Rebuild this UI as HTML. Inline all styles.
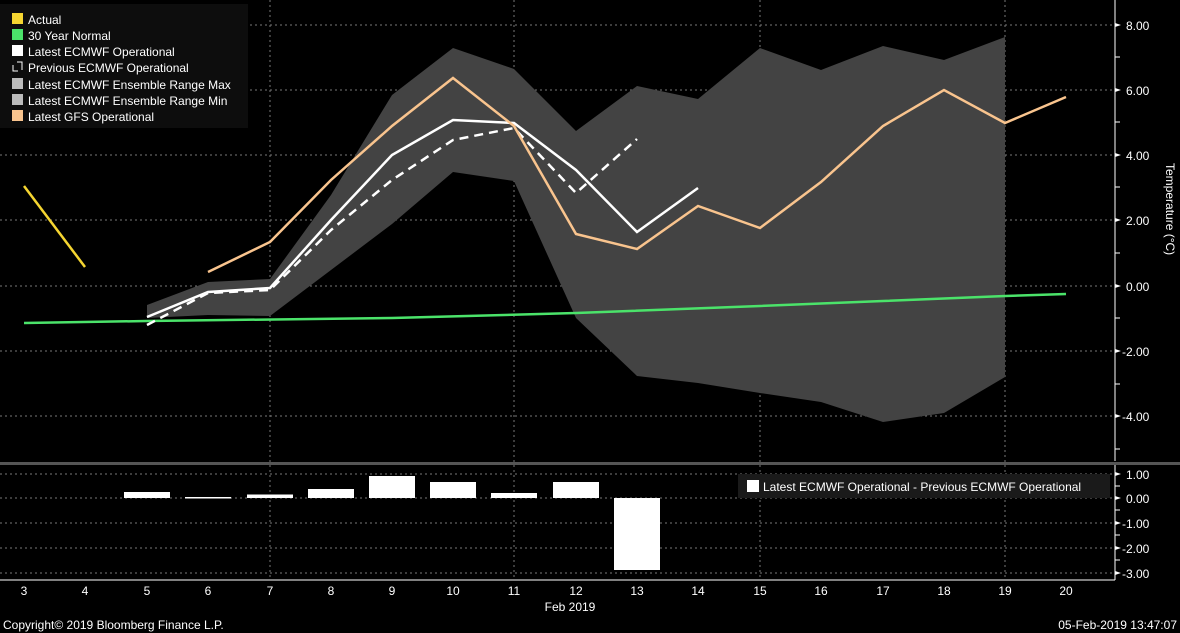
<!DOCTYPE html><html><head><style>body{margin:0;background:#000;width:1180px;height:633px;overflow:hidden}svg{display:block}text{font-family:"Liberation Sans",sans-serif;fill:#fff;font-size:12px}</style></head><body>
<svg width="1180" height="633" viewBox="0 0 1180 633">
<g stroke="#777" stroke-dasharray="2,3" stroke-width="1">
<line x1="0" y1="25" x2="1115" y2="25"/><line x1="0" y1="90" x2="1115" y2="90"/><line x1="0" y1="155" x2="1115" y2="155"/><line x1="0" y1="220" x2="1115" y2="220"/><line x1="0" y1="286" x2="1115" y2="286"/><line x1="0" y1="351" x2="1115" y2="351"/><line x1="0" y1="416" x2="1115" y2="416"/>
<line x1="0" y1="474" x2="1115" y2="474"/><line x1="0" y1="498" x2="1115" y2="498"/><line x1="0" y1="523" x2="1115" y2="523"/><line x1="0" y1="548" x2="1115" y2="548"/><line x1="0" y1="573" x2="1115" y2="573"/>
<line x1="270" y1="0" x2="270" y2="580"/><line x1="514" y1="0" x2="514" y2="580"/><line x1="760" y1="0" x2="760" y2="580"/><line x1="1005" y1="0" x2="1005" y2="580"/>
</g>
<polygon fill="#434343" points="147,305 208,282 270,279 331,195 392,95 453,48 514,69 576,131 637,86 698,99 760,48 821,70 883,46 944,60 1005,37 1005,377 944,413 883,422 821,402 760,393 698,383 637,376 576,318 514,181 453,172 392,224 331,270 270,316 208,315 147,318"/>
<rect x="0" y="4" width="248" height="124" fill="#0d0d0d"/>
<polyline fill="none" stroke="#f5d531" stroke-width="2.5" points="24,186 85,267"/>
<polyline fill="none" stroke="#4be36a" stroke-width="2.5" points="24,323 147,321 392,318 576,313 760,306 883,301 1005,296 1066,294"/>
<polyline fill="none" stroke="#fff" stroke-width="2.5" stroke-dasharray="9,6" points="147,325 208,293 270,290 331,230 392,180 453,140 514,128 576,193 637,139"/>
<polyline fill="none" stroke="#fff" stroke-width="2.5" points="147,317 208,292 270,288 331,220 392,155 453,120 514,123 576,170 637,232 698,188"/>
<polyline fill="none" stroke="#f9c48e" stroke-width="2.5" points="208,272 270,242 331,180 392,126 453,78 514,126 576,234 637,249 698,206 760,228 821,182 883,126 944,90 1005,123 1066,97"/>
<g font-size="12.6">
<rect x="12" y="13" width="11" height="11" fill="#f5d531"/><text x="28" y="24">Actual</text>
<rect x="12" y="29" width="11" height="11" fill="#4be36a"/><text x="28" y="40">30 Year Normal</text>
<rect x="12" y="45" width="11" height="11" fill="#fff"/><text x="28" y="56">Latest ECMWF Operational</text>
<path d="M13,65 v6 h5 M17,62 h5 v8" stroke="#fff" fill="none"/><text x="28" y="72">Previous ECMWF Operational</text>
<rect x="12" y="78" width="11" height="11" fill="#bbb"/><text x="28" y="89">Latest ECMWF Ensemble Range Max</text>
<rect x="12" y="94" width="11" height="11" fill="#bbb"/><text x="28" y="105">Latest ECMWF Ensemble Range Min</text>
<rect x="12" y="110" width="11" height="11" fill="#f9c48e"/><text x="28" y="121">Latest GFS Operational</text>
</g>
<rect x="0" y="462" width="1180" height="3" fill="#555"/>
<g fill="#fff">
<rect x="124" y="492" width="46" height="6"/><rect x="185" y="497" width="46" height="1.5"/><rect x="247" y="494.5" width="46" height="3.5"/><rect x="308" y="489" width="46" height="9"/><rect x="369" y="476" width="46" height="22"/><rect x="430" y="482" width="46" height="16"/><rect x="491" y="493" width="46" height="5"/><rect x="553" y="482" width="46" height="16"/><rect x="614" y="498" width="46" height="72"/>
</g>
<rect x="738" y="474" width="372" height="24" fill="#1a1a1a"/>
<rect x="747" y="480" width="12" height="12" fill="#fff"/><text x="763" y="491" font-size="12.6">Latest ECMWF Operational - Previous ECMWF Operational</text>
<line x1="1115" y1="0" x2="1115" y2="461" stroke="#fff"/><line x1="1115" y1="465" x2="1115" y2="580" stroke="#fff"/>
<line x1="0" y1="580" x2="1115" y2="580" stroke="#fff"/>
<g fill="#fff">
<path d="M1115,23 l6,2 -6,2z M1115,88 l6,2 -6,2z M1115,153 l6,2 -6,2z M1115,218 l6,2 -6,2z M1115,284 l6,2 -6,2z M1115,349 l6,2 -6,2z M1115,414 l6,2 -6,2z M1115,472 l6,2 -6,2z M1115,496 l6,2 -6,2z M1115,521 l6,2 -6,2z M1115,546 l6,2 -6,2z M1115,571 l6,2 -6,2z"/>
</g>
<g stroke="#fff"><line x1="1115" y1="57" x2="1120" y2="57"/><line x1="1115" y1="122" x2="1120" y2="122"/><line x1="1115" y1="187" x2="1120" y2="187"/><line x1="1115" y1="253" x2="1120" y2="253"/><line x1="1115" y1="318" x2="1120" y2="318"/><line x1="1115" y1="384" x2="1120" y2="384"/><line x1="1115" y1="449" x2="1120" y2="449"/><line x1="1115" y1="486" x2="1120" y2="486"/><line x1="1115" y1="510" x2="1120" y2="510"/><line x1="1115" y1="535" x2="1120" y2="535"/><line x1="1115" y1="560" x2="1120" y2="560"/></g>
<g font-size="13">
<text x="1126" y="30">8.00</text><text x="1126" y="95">6.00</text><text x="1126" y="160">4.00</text><text x="1126" y="225">2.00</text><text x="1126" y="291">0.00</text><text x="1122" y="356">-2.00</text><text x="1122" y="421">-4.00</text>
<text x="1126" y="479">1.00</text><text x="1126" y="503">0.00</text><text x="1122" y="528">-1.00</text><text x="1122" y="553">-2.00</text><text x="1122" y="578">-3.00</text>
</g>
<text x="1166" y="163" font-size="14" transform="rotate(90 1166 163)">Temperature (°C)</text>
<g text-anchor="middle" font-size="12.5">
<text x="24" y="595">3</text><text x="85" y="595">4</text><text x="147" y="595">5</text><text x="208" y="595">6</text><text x="270" y="595">7</text><text x="331" y="595">8</text><text x="392" y="595">9</text><text x="453" y="595">10</text><text x="514" y="595">11</text><text x="576" y="595">12</text><text x="637" y="595">13</text><text x="698" y="595">14</text><text x="760" y="595">15</text><text x="821" y="595">16</text><text x="883" y="595">17</text><text x="944" y="595">18</text><text x="1005" y="595">19</text><text x="1066" y="595">20</text>
<text x="570" y="611">Feb 2019</text>
</g>
<text x="3" y="629" font-size="12.5">Copyright© 2019 Bloomberg Finance L.P.</text>
<text x="1177" y="629" text-anchor="end" font-size="12.5">05-Feb-2019 13:47:07</text>
</svg></body></html>
